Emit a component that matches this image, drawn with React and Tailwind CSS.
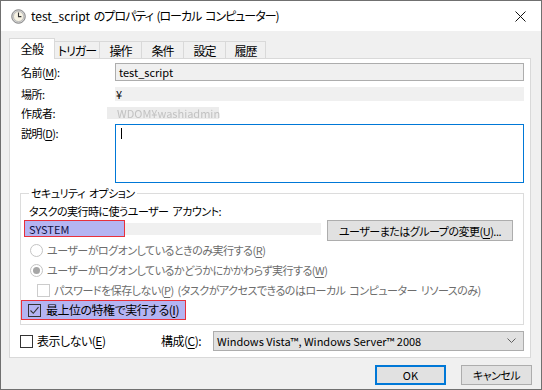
import React from "react";

const Key = ({ k }) => (
  <>
    (<span className="underline underline-offset-2">{k}</span>)
  </>
);

const Radio = ({ checked }) => (
  <span className="w-[13px] h-[13px] rounded-full border border-[#c4c4c4] bg-white flex items-center justify-center shrink-0">
    {checked && <span className="w-[7px] h-[7px] rounded-full bg-[#a6a6a6]" />}
  </span>
);

const Check = ({ checked, disabled }) => (
  <span
    className={`w-[13px] h-[13px] border shrink-0 flex items-center justify-center ${
      disabled ? "border-[#cccccc] bg-white" : "border-[#333333] bg-transparent"
    }`}
  >
    {checked && (
      <svg width="11" height="11" viewBox="0 0 11 11">
        <path d="M1.5 5.5 L4.3 8.3 L9.5 2.2" fill="none" stroke="#333" strokeWidth="1.1" />
      </svg>
    )}
  </span>
);

const tabs = [
  { label: "トリガー", w: "w-[46px]" },
  { label: "操作", w: "w-[43px]" },
  { label: "条件", w: "w-[43px]" },
  { label: "設定", w: "w-[43px]" },
  { label: "履歴", w: "w-[41px]" },
];

export default function App() {
  return (
    <div className="w-[542px] h-[390px] border border-[#707070] bg-[#f0f0f0] flex flex-col text-[11px] tracking-[-0.5px] [word-spacing:2px] leading-[16px] text-black whitespace-nowrap font-['Noto_Sans_CJK_JP','Noto_Sans',sans-serif] [font-feature-settings:'palt'] overflow-hidden">
      {/* title bar */}
      <div className="h-[30px] bg-white flex items-center pl-[10px] pr-[15px] shrink-0">
        <svg width="15" height="15" viewBox="0 0 15 15" className="shrink-0">
          <circle cx="7.5" cy="7.5" r="6.8" fill="#cfcfcf" stroke="#7d7d7d" strokeWidth="0.9" />
          <circle cx="7.5" cy="7.5" r="5" fill="#f7f3e4" stroke="#a9a9a9" strokeWidth="0.6" />
          <path d="M7.5 3.6 V7.6 H10.4" fill="none" stroke="#333" strokeWidth="1.1" />
        </svg>
        <span className="ml-[5px] text-[12px] tracking-[-1px]">
          <span className="tracking-normal">test_script</span> のプロパティ (ローカル コンピューター)
        </span>
        <svg width="11" height="11" viewBox="0 0 11 11" className="ml-auto">
          <path d="M0.5 0.5 L10.5 10.5 M10.5 0.5 L0.5 10.5" stroke="#111" strokeWidth="1" />
        </svg>
      </div>

      {/* body */}
      <div className="flex-1 flex flex-col pl-[8px] pt-[7px]">
        {/* tabs */}
        <div className="flex items-end h-[21px] relative z-10 -mb-[1px] text-[12px]">
          <div className="w-[46px] h-[21px] bg-white border border-b-0 border-[#d9d9d9] flex items-center justify-center pb-[1px]">
            全般
          </div>
          {tabs.map((t) => (
            <div
              key={t.label}
              className={`${t.w} -ml-[1px] h-[18px] border border-b-0 border-[#d9d9d9] flex items-center justify-center tracking-[-1px]`}
            >
              {t.label}
            </div>
          ))}
        </div>

        {/* panel */}
        <div className="w-[522px] h-[300px] border border-[#d9d9d9] bg-white pl-[11px] flex flex-col">
          <div className="flex mt-[4px] h-[18px] items-center">
            <span className="w-[94px]">
              名前<Key k="M" />:
            </span>
            <div className="w-[409px] h-[18px] border border-[#adadad] bg-[#f0f0f0] pl-[3px] flex items-center tracking-normal">
              test_script
            </div>
          </div>
          <div className="flex mt-[6px] h-[14px] items-center">
            <span className="w-[94px]">場所:</span>
            <div className="w-[409px] h-[14px] bg-[#f0f0f0] pl-[1px] flex items-center">¥</div>
          </div>
          <div className="flex mt-[5px] h-[14px] items-center">
            <span className="w-[86px]">作成者:</span>
            <div className="w-[112px] h-[12px] bg-[#ececec] flex items-center pl-[10px]">
              <span className="text-[#c2c2c2] blur-[0.7px] tracking-normal">WDOM¥washiadmin</span>
            </div>
          </div>
          <div className="flex mt-[4px]">
            <span className="w-[94px] pt-[1px]">
              説明<Key k="D" />:
            </span>
            <div className="w-[409px] h-[59px] border border-[#0078d7] bg-white pl-[5px] pt-[3px]">
              <div className="w-[1px] h-[11px] bg-black" />
            </div>
          </div>

          {/* security options */}
          <fieldset className="mt-[2px] -ml-[1px] w-[504px] border border-[#dcdcdc] pl-[3px] pb-[4px]">
            <legend className="ml-[5px] px-[2px] leading-[16px]">セキュリティ オプション</legend>
            <div className="mt-[2px] ml-[5px] h-[16px]">タスクの実行時に使うユーザー アカウント:</div>
            <div className="flex items-start mt-[1px] h-[21px]">
              <div className="w-[101px] h-[17px] border border-[#e8303c] bg-[#b4b4f2] pl-[4px] flex items-center text-[#101040] tracking-normal">
                SYSTEM
              </div>
              <div className="w-[196px] h-[12px] mt-[3px] bg-[#f0f0f0]" />
              <div className="ml-[6px] w-[186px] h-[21px] border border-[#adadad] bg-[#e1e1e1] flex items-center justify-center">
                ユーザーまたはグループの変更<Key k="U" />...
              </div>
            </div>
            <div className="flex items-center mt-[1px] h-[16px] ml-[6px] text-[#6d6d6d]">
              <Radio />
              <span className="ml-[4px]">
                ユーザーがログオンしているときのみ実行する<Key k="R" />
              </span>
            </div>
            <div className="flex items-center mt-[4px] h-[16px] ml-[6px] text-[#6d6d6d]">
              <Radio checked />
              <span className="ml-[4px]">
                ユーザーがログオンしているかどうかにかかわらず実行する<Key k="W" />
              </span>
            </div>
            <div className="flex items-center mt-[4px] h-[16px] ml-[13px] text-[#6d6d6d]">
              <Check disabled />
              <span className="ml-[4px]">
                パスワードを保存しない<Key k="P" /> (タスクがアクセスできるのはローカル コンピューター リソースのみ)
              </span>
            </div>
            <div className="flex items-center mt-[2px] -ml-[3px] w-[165px] h-[20px] border border-[#e8303c] bg-[#b4b4f2] pl-[6px] text-[12px]">
              <Check checked />
              <span className="ml-[5px]">
                最上位の特権で実行する<Key k="I" />
              </span>
            </div>
          </fieldset>

          {/* bottom row */}
          <div className="flex items-center mt-[6px] h-[20px]">
            <div className="-ml-[1px] w-[141px] flex items-center text-[12px]">
              <Check />
              <span className="ml-[4px]">
                表示しない<Key k="E" />
              </span>
            </div>
            <span className="w-[52px] text-[12px]">
              構成<Key k="C" />:
            </span>
            <div className="w-[311px] h-[20px] border border-[#adadad] bg-[#e1e1e1] flex items-center pl-[3px] pr-[7px] tracking-normal [word-spacing:0px]">
              <span>Windows Vista™, Windows Server™ 2008</span>
              <svg width="9" height="6" viewBox="0 0 9 6" className="ml-auto">
                <path d="M0.5 0.5 L4.5 4.5 L8.5 0.5" fill="none" stroke="#606060" strokeWidth="1" />
              </svg>
            </div>
          </div>
        </div>

        {/* buttons */}
        <div className="w-[523px] flex justify-end gap-[15px] mt-[7px]">
          <div className="w-[71px] h-[20px] border-2 border-[#0078d7] bg-[#e1e1e1] flex items-center justify-center tracking-normal">
            OK
          </div>
          <div className="w-[71px] h-[20px] border border-[#adadad] bg-[#e1e1e1] flex items-center justify-center">
            キャンセル
          </div>
        </div>
      </div>
    </div>
  );
}
